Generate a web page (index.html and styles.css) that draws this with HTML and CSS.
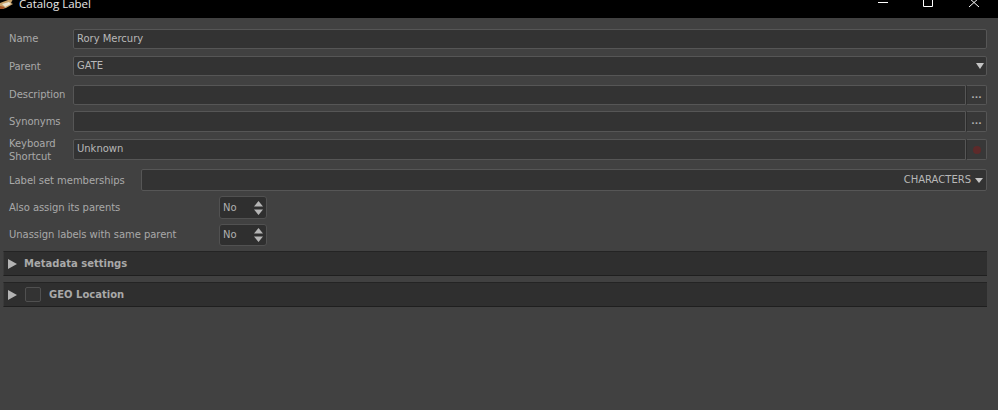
FILE: index.html
```html
<!DOCTYPE html>
<html lang="en">
<head>
<meta charset="utf-8">
<title>Catalog Label</title>
<link rel="stylesheet" href="styles.css">
</head>
<body>
<header class="titlebar">
  <svg class="app-icon" width="14" height="10" viewBox="0 0 14 10"><path d="M0 4 8 1 13 0 11 4 13 5 6 9 2 10 0 8z" fill="#c9a26a"/><path d="M2 5 9 3 11 5 5 8z" fill="#e9e2d0"/><path d="M0 7 5 8 3 10 0 10z" fill="#a5562a"/></svg>
  <span class="title">Catalog Label</span>
  <div class="winbtns">
    <svg class="winbtn" width="46" height="18" viewBox="0 0 46 18"><path d="M19 2.500H29" stroke="#fff" fill="none"/></svg>
    <svg class="winbtn" width="46" height="18" viewBox="0 0 46 18"><path d="M18.500 -3H27.500V6.500H18.500Z" stroke="#fff" fill="none"/></svg>
    <svg class="winbtn" width="46" height="18" viewBox="0 0 46 18"><path d="M18-2 28 7M28-2 18 7" stroke="#fff" fill="none"/></svg>
  </div>
</header>
<main class="form">
  <div class="row r-name"><label class="lbl up">Name</label><div class="field"><span>Rory Mercury</span></div></div>
  <div class="row r-parent"><label class="lbl">Parent</label><div class="field"><span>GATE</span><i class="caret"></i></div></div>
  <div class="row r-desc"><label class="lbl up">Description</label><div class="field joined"></div><div class="sidebtn">...</div></div>
  <div class="row r-syn"><label class="lbl">Synonyms</label><div class="field joined"></div><div class="sidebtn">...</div></div>
  <div class="row r-key"><label class="lbl">Keyboard<br>Shortcut</label><div class="field joined"><span>Unknown</span></div><div class="sidebtn clear"><b></b></div></div>
  <div class="row r-set"><label class="lbl wide">Label set memberships</label><div class="field end"><span>CHARACTERS</span><i class="caret small"></i></div></div>
  <div class="row r-also"><label class="lbl spin-lbl">Also assign its parents</label><div class="spin"><span>No</span><svg width="9" height="14" viewBox="0 0 9 14"><path d="M4.500 0 9 5.500H0zM0 8.500H9L4.500 14z" fill="#b5b5b5"/></svg></div></div>
  <div class="row r-un"><label class="lbl spin-lbl up">Unassign labels with same parent</label><div class="spin"><span>No</span><svg width="9" height="14" viewBox="0 0 9 14"><path d="M4.500 0 9 5.500H0zM0 8.500H9L4.500 14z" fill="#b5b5b5"/></svg></div></div>
  <section class="group g-meta"><i class="tri"></i><span class="gtitle">Metadata settings</span></section>
  <section class="group g-geo"><i class="tri"></i><i class="check"></i><span class="gtitle">GEO Location</span></section>
</main>
</body>
</html>
```
FILE: styles.css
```css
* { box-sizing: border-box; }
html, body { margin: 0; height: 100%; }
body {
  background: #414141;
  color: #b4b4b4;
  font: 10px/13px "DejaVu Sans", sans-serif;
  overflow: hidden;
}
.titlebar {
  height: 18px;
  background: #000;
  display: flex;
  align-items: flex-start;
  overflow: hidden;
}
.app-icon { margin: -1px 0 0 0; flex: none; }
.title {
  margin: -4px 0 0 5px;
  font: 11.500px/16px "Open Sans", sans-serif;
  color: #e8e8e8;
}
.winbtns { margin-left: auto; display: flex; margin-right: 1px; }
.winbtn { display: block; }
.form { padding: 11px 11px 0 9px; display: flex; flex-direction: column; }
.row { display: flex; align-items: center; }
.lbl { width: 64px; flex: none; color: #a9a9a9; letter-spacing: -0.05px; }
.lbl.up { padding-bottom: 1px; }
.lbl.wide { width: 132px; }
.lbl.spin-lbl { width: 210px; }
.field {
  flex: 1;
  height: 100%;
  display: flex;
  align-items: center;
  justify-content: space-between;
  padding: 0 3px 2px;
  background: #333;
  border: 1px solid #565656;
  border-radius: 2px;
  color: #b8b8b8;
  min-width: 0;
}
.field.joined { border-radius: 2px 0 0 2px; }
.field.end { justify-content: flex-end; gap: 4px; padding-right: 3px; }
.field > span { letter-spacing: -0.02px; }
.field.end > span { letter-spacing: 0; }
.sidebtn {
  width: 21px;
  height: 100%;
  flex: none;
  display: flex;
  align-items: center;
  justify-content: center;
  background: #383838;
  border: 1px solid #565656;
  border-left: 1px solid #2c2c2c;
  border-radius: 0 2px 2px 0;
  color: #b0b0b0;
  font-weight: bold;
  font-size: 9px;
  line-height: 9px;
}
.sidebtn b { width: 8px; height: 8px; border-radius: 50%; background: #5e2a2a; }
.caret {
  width: 0; height: 0;
  margin-right: -1px;
  margin-top: 2px;
  border: 4.500px solid transparent;
  border-top: 6px solid #c4c4c4;
  border-bottom: 0;
}
.caret.small { margin-right: 0; margin-top: 2px; border-width: 4px; border-top-width: 5px; border-bottom: 0; }
.r-name { height: 20px; }
.r-parent { height: 20px; margin-top: 7px; }
.r-desc { height: 20px; margin-top: 9px; }
.r-syn { height: 21px; margin-top: 6px; }
.r-key { height: 21px; margin-top: 7px; }
.r-set { height: 22px; margin-top: 9px; }
.r-also { height: 23px; margin-top: 5px; }
.r-un { height: 22px; margin-top: 5px; }
.spin {
  width: 48px;
  height: 100%;
  display: flex;
  align-items: center;
  justify-content: space-between;
  padding: 0 3px 0 3px;
  background: #2f2f2f;
  border: 1px solid #515151;
  border-radius: 3px;
  color: #b0b0b0;
}
.r-un .spin > span { margin-bottom: 1px; }
.group {
  display: flex;
  align-items: center;
  height: 25px;
  margin-left: -6px;
  padding-left: 4px;
  background: #2f2f2f;
  border-top: 1px solid #242424;
  border-bottom: 1px solid #1f1f1f;
  border-left: 1px solid #3a3a3a;
}
.g-meta { margin-top: 5px; }
.g-geo { margin-top: 6px; }
.tri {
  width: 0; height: 0;
  border: 5px solid transparent;
  border-left: 9px solid #b4b4b4;
  border-right: 0;
}
.gtitle { margin-left: 7px; margin-bottom: 1px; font-weight: bold; color: #a9a9a9; letter-spacing: 0; }
.check {
  width: 16px; height: 15px;
  margin-left: 8px;
  border: 1px solid #505050;
  border-radius: 2px;
  background: #333;
}
.g-geo .gtitle { margin-left: 8px; }
```
